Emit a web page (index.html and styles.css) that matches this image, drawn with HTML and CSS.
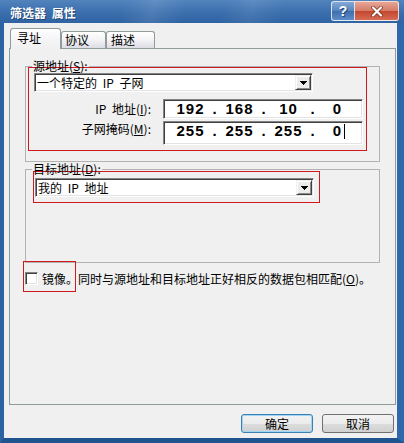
FILE: index.html
```html
<!DOCTYPE html>
<html lang="zh-CN">
<head>
    <meta charset="UTF-8">
    <title>筛选器 属性</title>
    <link rel="stylesheet" href="styles.css">
</head>
<body>
<div class="window">
    <div class="titlebar">
        <span class="title">筛选器 属性</span>
        <div class="caption">
            <span class="cap-btn cap-help">?</span>
            <span class="cap-btn cap-close">
                <svg width="12" height="11" viewBox="0 0 12 11">
                    <path d="M2 1.5l8 8M10 1.5l-8 8" stroke="#7a2a1c" stroke-width="3.6" stroke-linecap="round"/>
                    <path d="M2 1.5l8 8M10 1.5l-8 8" stroke="#fff" stroke-width="2.2" stroke-linecap="round"/>
                </svg>
            </span>
        </div>
    </div>

    <div class="frame">
        <div class="client">
            <div class="tabs">
                <div class="tab tab-1 active">寻址</div>
                <div class="tab tab-2">协议</div>
                <div class="tab tab-3">描述</div>
            </div>

            <div class="panel">
                <fieldset class="group group-src">
                    <legend>源地址(<u>S</u>):</legend>
                    <div class="mark mark-src">
                        <div class="combo">
                            <span class="combo-text">一个特定的 IP 子网</span>
                            <span class="drop"><svg width="7" height="4" viewBox="0 0 7 4"><path d="M0 0h7L3.5 4z" fill="#000"/></svg></span>
                        </div>
                        <div class="ip-row ip-row-1">
                            <label class="ip-label">IP 地址(<u>I</u>):</label>
                            <div class="ipbox">
                                <span class="ip-field">192</span><span class="ip-dot">.</span>
                                <span class="ip-field">168</span><span class="ip-dot">.</span>
                                <span class="ip-field">10</span><span class="ip-dot">.</span>
                                <span class="ip-field">0</span>
                            </div>
                        </div>
                        <div class="ip-row ip-row-2">
                            <label class="ip-label">子网掩码(<u>M</u>):</label>
                            <div class="ipbox ipbox-tall">
                                <span class="ip-field">255</span><span class="ip-dot">.</span>
                                <span class="ip-field">255</span><span class="ip-dot">.</span>
                                <span class="ip-field">255</span><span class="ip-dot">.</span>
                                <span class="ip-field">0<span class="caret"></span></span>
                            </div>
                        </div>
                    </div>
                </fieldset>

                <fieldset class="group group-dst">
                    <legend>目标地址(<u>D</u>):</legend>
                    <div class="mark mark-dst">
                        <div class="combo">
                            <span class="combo-text">我的 IP 地址</span>
                            <span class="drop"><svg width="7" height="4" viewBox="0 0 7 4"><path d="M0 0h7L3.5 4z" fill="#000"/></svg></span>
                        </div>
                    </div>
                </fieldset>

                <div class="mirror-row">
                    <div class="mark mark-mirror">
                        <span class="checkbox"></span>
                        <span class="mirror-text">镜像。</span>
                    </div>
                    <span class="mirror-rest">同时与源地址和目标地址正好相反的数据包相匹配(<u>O</u>)。</span>
                </div>
            </div>

            <div class="buttons">
                <button class="btn btn-default">确定</button>
                <button class="btn">取消</button>
            </div>
        </div>
    </div>
</div>
</body>
</html>
```

FILE: styles.css
```css
* {
    box-sizing: border-box;
}

body {
    margin: 0;
    width: 404px;
    height: 443px;
    overflow: hidden;
    font-family: "Noto Sans CJK SC", sans-serif;
    font-size: 12px;
    color: #000;
    word-spacing: 3px;
}

.window {
    display: flex;
    flex-direction: column;
    height: 443px;
}

/* title bar */
.titlebar {
    display: flex;
    align-items: flex-start;
    height: 23px;
    background:
        linear-gradient(105deg, rgba(255,255,255,0) 30%, rgba(255,255,255,0.10) 38%, rgba(255,255,255,0) 46%, rgba(255,255,255,0) 55%, rgba(255,255,255,0.08) 62%, rgba(255,255,255,0) 70%),
        linear-gradient(#5283bd, #3a6ead 55%, #2f63a3);
}

.title {
    padding: 5px 0 0 10px;
    line-height: 16px;
    color: #fff;
    font-weight: bold;
    text-shadow: 1px 1px 0 rgba(0,0,0,0.35);
}

.caption {
    display: flex;
    margin: 1px 5px 0 auto;
}

.cap-btn {
    display: flex;
    align-items: center;
    justify-content: center;
    height: 20px;
    border: 1px solid rgba(255,255,255,0.75);
    color: #fff;
}

.cap-help {
    width: 24px;
    border-radius: 3px 0 0 3px;
    background: linear-gradient(#86a9d6, #5684be 50%, #3d6fae 52%, #5d8cc6);
    font-family: "Liberation Sans", sans-serif;
    font-weight: bold;
    font-size: 14px;
    text-shadow: 1px 1px 0 #1f4677;
}

.cap-close {
    width: 44px;
    border-left: none;
    border-radius: 0 3px 3px 0;
    background: linear-gradient(#e6a696, #d57a66 50%, #c4472f 52%, #d66c55);
}

/* window frame */
.frame {
    flex: 1;
    border-left: 4px solid #2b63a5;
    border-right: 7px solid #2f68ab;
    border-bottom: 5px solid #1f548f;
    background: #f0f0f0;
}

.client {
    padding: 4px 1px 0 5px;
}

/* tabs */
.tabs {
    display: flex;
    align-items: flex-end;
    height: 21px;
    padding-left: 1px;
    position: relative;
    z-index: 1;
}

.tab {
    height: 17px;
    padding-left: 4px;
    line-height: 16px;
    border: 1px solid #919b9c;
    border-bottom: none;
    border-radius: 3px 3px 0 0;
    background: linear-gradient(#ffffff, #f3f3f6 50%, #dcdce4);
}

.tab-1 {
    width: 51px;
}

.tab-2 {
    width: 45px;
    padding-left: 3px;
}

.tab-3 {
    width: 49px;
}

.tab.active {
    height: 21px;
    margin-bottom: -1px;
    padding: 1px 0 0 6px;
    background: linear-gradient(#fefefe, #f4f4f6 60%, #f0f0f0);
}

.panel {
    height: 357px;
    padding: 10px 15px 0;
    border: 1px solid #919b9c;
    background: #f0f0f0;
}

/* group boxes */
.group {
    margin: 0;
    padding: 0 0 10px;
    min-width: 0;
    border: 1px solid #b3b3b3;
}

.group legend {
    margin-left: 6px;
    padding: 0 1px;
    line-height: 14px;
}

.group-dst {
    padding-bottom: 59px;
}

/* red annotation frames */
.mark {
    border: 1px solid #d0191f;
}

.mark-src {
    width: 339px;
    margin: -6px 0 0 2px;
    padding: 5px 0 5px 5px;
}

.mark-dst {
    width: 287px;
    margin: -5px 0 0 7px;
    padding: 6px 5px 5px 1px;
}

/* combo box */
.combo {
    display: flex;
    width: 279px;
    height: 19px;
    padding: 1px;
    border: 1px solid;
    border-color: #848484 #fff #fff #848484;
    box-shadow: inset 1px 1px #404040, inset -1px -1px #e3e3e3;
    background: #fff;
}

.combo-text {
    flex: 1;
    padding-left: 1px;
    line-height: 15px;
    white-space: nowrap;
}

.drop {
    display: flex;
    align-items: center;
    justify-content: center;
    width: 16px;
    height: 15px;
    border: 1px solid;
    border-color: #f0f0f0 #404040 #404040 #f0f0f0;
    box-shadow: inset 1px 1px #fff, inset -1px -1px #8a8a8a;
    background: #ececec;
}

.drop svg {
    display: block;
    shape-rendering: crispEdges;
}

/* ip address rows */
.ip-row {
    display: flex;
    align-items: flex-start;
    margin-top: 2px;
}

.ip-row-1 {
    margin-top: 7px;
}

.ip-label {
    width: 117px;
    text-align: right;
    line-height: 16px;
    white-space: nowrap;
}

.ip-row-1 .ip-label {
    padding-top: 2px;
}

.ipbox {
    display: flex;
    align-items: flex-start;
    width: 200px;
    height: 20px;
    margin-left: 12px;
    padding: 1px 0 0 8px;
    border: 1px solid;
    border-color: #848484 #fff #fff #848484;
    box-shadow: inset 1px 1px #404040, inset -1px -1px #e3e3e3;
    background: #fff;
    font-family: "Liberation Sans", sans-serif;
    font-weight: bold;
    font-size: 15px;
    line-height: 16px;
}

.ipbox-tall {
    height: 24px;
}

.ip-field {
    width: 36px;
    text-align: center;
    letter-spacing: 1px;
    padding-left: 1px;
}

.ip-dot {
    width: 13px;
    text-align: center;
}

.caret {
    display: inline-block;
    width: 1px;
    height: 15px;
    margin: 0 -3px 0 2px;
    vertical-align: -3px;
    background: #000;
}

/* mirror checkbox */
.mirror-row {
    display: flex;
    align-items: flex-start;
    margin: -2px 0 0 -2px;
}

.mark-mirror {
    display: flex;
    align-items: flex-start;
    width: 53px;
    height: 31px;
    padding: 10px 0 0 1px;
    white-space: nowrap;
}

.checkbox {
    flex: none;
    width: 13px;
    height: 13px;
    margin-right: 4px;
    border: 1px solid;
    border-color: #848484 #fff #fff #848484;
    box-shadow: inset 1px 1px #404040, inset -1px -1px #e3e3e3;
    background: #fff;
}

.mirror-text {
    line-height: 13px;
}

.mirror-rest {
    margin: 11px 0 0 2px;
    line-height: 13px;
    white-space: nowrap;
}

/* dialog buttons */
.buttons {
    display: flex;
    justify-content: flex-end;
    gap: 9px;
    margin: 9px 2px 0 0;
}

.btn {
    width: 72px;
    height: 19px;
    padding: 0;
    border: 1px solid #707070;
    border-radius: 3px;
    background: linear-gradient(#f3f3f3, #ebebeb 50%, #dddddd 51%, #d0d0d0);
    font: inherit;
    line-height: 16px;
    color: #000;
}

.btn-default {
    border-color: #3c7fb1;
    box-shadow: inset 0 0 0 1px #9fd5f5;
}
```
